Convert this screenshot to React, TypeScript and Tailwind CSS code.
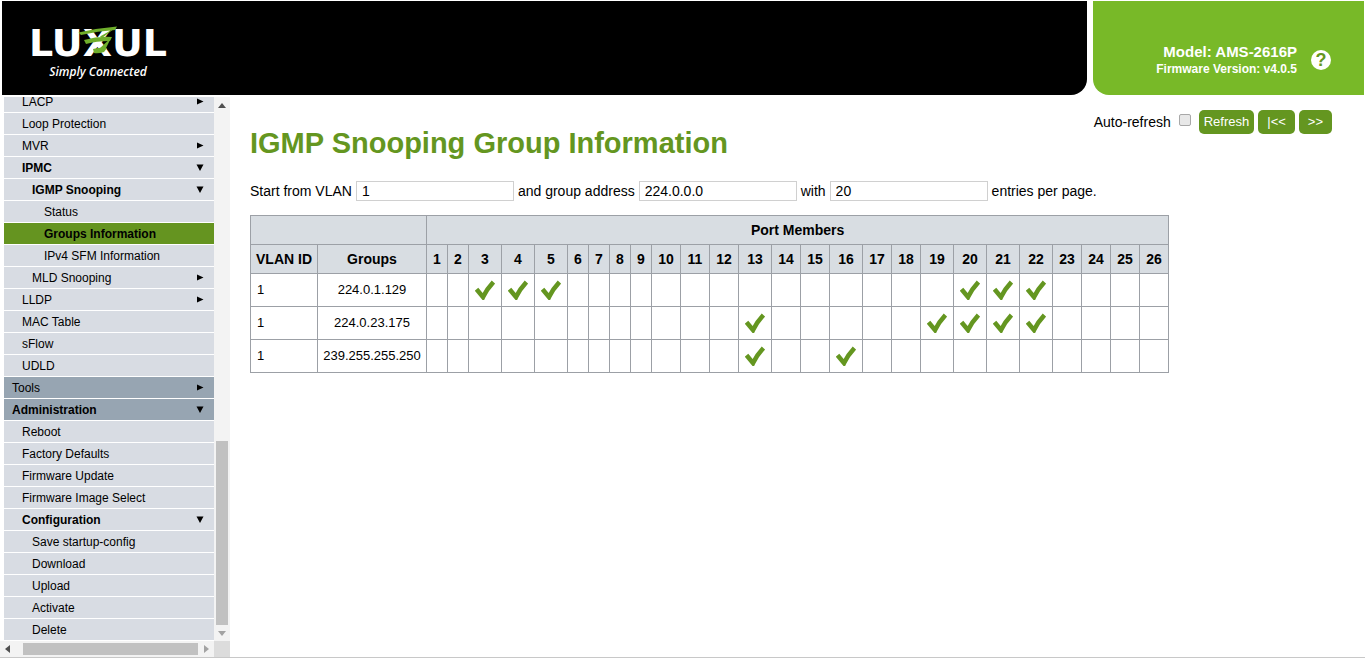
import * as React from 'react';
import { clsx } from 'clsx';

type MenuItem = {
    label: string;
    level: number;
    state?: 'open' | 'closed';
    active?: boolean;
};

const menu: MenuItem[] = [
    { label: 'LACP', level: 1, state: 'closed' },
    { label: 'Loop Protection', level: 1 },
    { label: 'MVR', level: 1, state: 'closed' },
    { label: 'IPMC', level: 1, state: 'open' },
    { label: 'IGMP Snooping', level: 2, state: 'open' },
    { label: 'Status', level: 3 },
    { label: 'Groups Information', level: 3, active: true },
    { label: 'IPv4 SFM Information', level: 3 },
    { label: 'MLD Snooping', level: 2, state: 'closed' },
    { label: 'LLDP', level: 1, state: 'closed' },
    { label: 'MAC Table', level: 1 },
    { label: 'sFlow', level: 1 },
    { label: 'UDLD', level: 1 },
    { label: 'Tools', level: 0, state: 'closed' },
    { label: 'Administration', level: 0, state: 'open' },
    { label: 'Reboot', level: 1 },
    { label: 'Factory Defaults', level: 1 },
    { label: 'Firmware Update', level: 1 },
    { label: 'Firmware Image Select', level: 1 },
    { label: 'Configuration', level: 1, state: 'open' },
    { label: 'Save startup-config', level: 2 },
    { label: 'Download', level: 2 },
    { label: 'Upload', level: 2 },
    { label: 'Activate', level: 2 },
    { label: 'Delete', level: 2 },
];

const indent = ['pl-2', 'pl-[18px]', 'pl-7', 'pl-10'];

const groups = [
    { vlan: 1, address: '224.0.1.129', ports: [3, 4, 5, 20, 21, 22] },
    { vlan: 1, address: '224.0.23.175', ports: [13, 19, 20, 21, 22] },
    { vlan: 1, address: '239.255.255.250', ports: [13, 16] },
];

const ports = Array.from({ length: 26 }, (_, i) => i + 1);

// A column is wider as soon as one of its cells holds a check mark
function portWidth(port: number) {
    if (groups.some(g => g.ports.includes(port))) return 'w-[33px]';
    return port < 10 ? 'w-[21px]' : 'w-[29px]';
}

function Arrow({ dir, className }: { dir: 'up' | 'down' | 'left' | 'right'; className?: string }) {
    const d = {
        up: 'M0 6L4 1L8 6Z',
        down: 'M0 2L4 7L8 2Z',
        left: 'M6 0L1 4L6 8Z',
        right: 'M2 0L7 4L2 8Z',
    }[dir];
    return (
        <svg viewBox="0 0 8 8" className={clsx('h-2 w-2 shrink-0 fill-current', className)} aria-hidden="true">
            <path d={d} />
        </svg>
    );
}

function Marker({ open }: { open: boolean }) {
    return (
        <svg viewBox="0 0 8 8" className="h-2 w-2 shrink-0" aria-hidden="true">
            <path d={open ? 'M0.5 0.5H7.5L4 7Z' : 'M1 0.5L7.5 3.5L1 6.5Z'} />
        </svg>
    );
}

function Check() {
    return (
        <svg viewBox="0 0 20 20" className="mx-auto h-5 w-5" role="img" aria-label="Member">
            <path d="M1.5 9.2L8 17Q11.8 9 18.4 2" fill="none" stroke="#649620" strokeWidth="4.6" strokeLinejoin="miter" />
        </svg>
    );
}

function Logo() {
    return (
        <div className="relative w-[148px] text-white">
            <div className="text-center font-['DejaVu_Sans'] text-[38px] leading-[42px] font-bold">LUXUL</div>
            <svg viewBox="0 0 40 30" className="absolute top-1 left-[54px] h-[30px] w-10 fill-[#6fae2b]" aria-hidden="true">
                <path d="M0.5 6.5Q20 2 39 0.5L37 4Q20 5 3 9Z" />
                <path d="M37 2L24 12L22 10.5Z" />
                <path d="M6 14Q20 10 34 11L32 15Q18 15 8 18Z" />
                <path d="M33 12L22 22L28 22Z" />
                <path d="M15 23Q22 21 29 22L26 26Q20 28 16 27Z" />
            </svg>
            <div className="text-center font-['Open_Sans'] text-xs leading-4 font-semibold italic">Simply Connected</div>
        </div>
    );
}

function Header() {
    return (
        <header className="flex h-24 gap-[6px] pt-px pr-px pb-px pl-[2px]">
            <div className="flex-1 rounded-br-2xl bg-black pt-[21px] pl-[22px]">
                <Logo />
            </div>
            <div className="flex w-[271px] items-center justify-end gap-[14px] rounded-bl-2xl bg-[#78b928] pt-6 pr-[33px] text-white">
                <div className="text-right font-bold">
                    <p className="text-[15px] leading-[18px]">Model: AMS-2616P</p>
                    <p className="text-xs leading-4">Firmware Version: v4.0.5</p>
                </div>
                <button aria-label="Help" className="flex h-5 w-5 items-center justify-center rounded-full bg-white text-lg leading-5 font-bold text-[#649620]">
                    ?
                </button>
            </div>
        </header>
    );
}

function Sidebar() {
    return (
        <aside className="flex w-[230px] shrink-0 flex-col">
            <div className="flex min-h-0 flex-1">
                {/* scrolled to its end, so the first row is cut off by the top edge */}
                <nav className="flex flex-1 flex-col justify-end overflow-hidden pl-1">
                    {menu.map(item => (
                        <a
                            key={item.label}
                            href="#"
                            className={clsx(
                                'mb-px flex h-[21px] shrink-0 items-center justify-between pr-[10px] text-xs',
                                indent[item.level],
                                item.active ? 'bg-[#659420]' : item.level === 0 ? 'bg-[#97a5b2]' : 'bg-[#d8dce3]',
                                (item.active || item.state === 'open') && 'font-bold',
                            )}
                        >
                            {item.label}
                            {item.state && <Marker open={item.state === 'open'} />}
                        </a>
                    ))}
                </nav>
                <div className="flex w-4 flex-col items-center bg-[#f3f3f3] py-1 text-[#505050]">
                    <Arrow dir="up" className="mt-px" />
                    <div className="flex w-3 flex-1 flex-col justify-end py-1">
                        <div className="h-[184px] bg-[#c1c1c1]" />
                    </div>
                    <Arrow dir="down" className="text-[#a3a3a3]" />
                </div>
            </div>
            <div className="flex h-4 bg-[#f3f3f3]">
                <div className="flex flex-1 items-center px-1 text-[#505050]">
                    <Arrow dir="left" />
                    <div className="mr-1 ml-[11px] h-3 flex-1 bg-[#c1c1c1]" />
                    <Arrow dir="right" className="text-[#a3a3a3]" />
                </div>
                <div className="w-4 bg-[#dcdcdc]" />
            </div>
        </aside>
    );
}

function ToolButton({ className, children }: { className: string; children: React.ReactNode }) {
    return <button className={clsx('h-6 rounded-[5px] bg-[#649620] text-[13px] text-white', className)}>{children}</button>;
}

function Field({ id, value, before }: { id: string; value: string; before: string }) {
    return (
        <>
            <label htmlFor={id}>{before}</label>
            <input id={id} type="text" defaultValue={value} className="h-5 w-[158px] border border-[#d0d0d0] px-[5px]" />
        </>
    );
}

function GroupTable() {
    const head = 'border border-[#9ca0a6] bg-[#d8dde2] h-[29px] p-0 text-sm';
    const cell = 'border border-[#9ca0a6] h-[33px] p-0';

    return (
        <table className="mt-[14px] w-[919px] table-fixed border-collapse">
            <colgroup>
                <col className="w-[67px]" />
                <col className="w-[109px]" />
                {ports.map(p => <col key={p} className={portWidth(p)} />)}
            </colgroup>
            <thead>
                <tr>
                    <th colSpan={2} className={head} />
                    <th colSpan={26} className={head}>Port Members</th>
                </tr>
                <tr>
                    <th className={head}>VLAN ID</th>
                    <th className={head}>Groups</th>
                    {ports.map(p => <th key={p} className={head}>{p}</th>)}
                </tr>
            </thead>
            <tbody>
                {groups.map(g => (
                    <tr key={g.address}>
                        <td className={clsx(cell, 'pl-[6px]')}>{g.vlan}</td>
                        <td className={clsx(cell, 'text-center')}>{g.address}</td>
                        {ports.map(p => (
                            <td key={p} className={cell}>{g.ports.includes(p) && <Check />}</td>
                        ))}
                    </tr>
                ))}
            </tbody>
        </table>
    );
}

export default function App() {
    return (
        <div className="flex h-screen flex-col bg-white pb-px font-['Liberation_Sans',Arial,sans-serif] text-[13px] text-black">
            <Header />
            <div className="flex min-h-0 flex-1 border-b border-[#c8c8c8] pt-px">
                <Sidebar />
                <main className="min-w-0 flex-1 pt-[13px] pr-[33px] pl-5">
                    <div className="flex h-6 items-center justify-end gap-1 text-sm">
                        <label htmlFor="auto" className="mr-1">Auto-refresh</label>
                        <input id="auto" type="checkbox" className="mr-1 mb-1 h-3 w-3 appearance-none rounded-[2px] border border-[#a8a8a8] bg-[#e8e8e8]" />
                        <ToolButton className="px-[5px]">Refresh</ToolButton>
                        <ToolButton className="px-[9px]">|&lt;&lt;</ToolButton>
                        <ToolButton className="px-[9px]">&gt;&gt;</ToolButton>
                    </div>
                    <h1 className="-mt-2 text-[29px] leading-[34px] font-bold text-[#649620]">IGMP Snooping Group Information</h1>
                    <div className="mt-[21px] flex items-center gap-1 text-sm leading-5">
                        <Field id="vlan" before="Start from VLAN" value="1" />
                        <Field id="group" before="and group address" value="224.0.0.0" />
                        <Field id="count" before="with" value="20" />
                        <span>entries per page.</span>
                    </div>
                    <GroupTable />
                </main>
            </div>
        </div>
    );
}
